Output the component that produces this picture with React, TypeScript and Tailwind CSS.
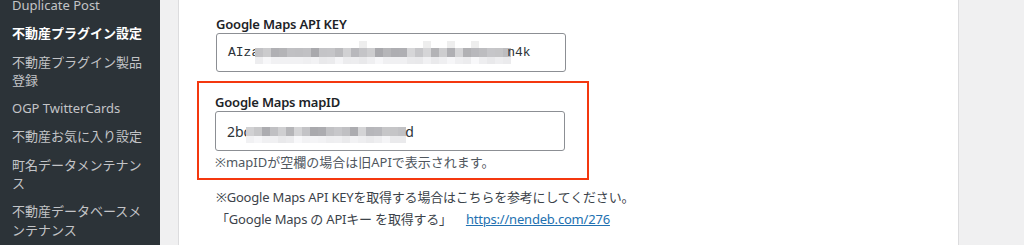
import React from 'react';

const menuItems = [
  { label: 'Duplicate Post' },
  { label: '不動産プラグイン設定', current: true },
  { label: '不動産プラグイン製品登録' },
  { label: 'OGP TwitterCards' },
  { label: '不動産お気に入り設定' },
  { label: '町名データメンテナンス' },
  { label: '不動産データベースメンテナンス' },
];

// pixelated blur over the secret values
const mosaicColor = (seed: number, row: number) => {
  const n = Math.abs(Math.sin(seed * 12.9898 + row * 78.233) * 43758.5453) % 1;
  if (row === 0) return n > 0.85 ? '#eeeeee' : '#ffffff';
  if (row === 1) return `rgb(${Math.round(168 + n * 48)},${Math.round(168 + n * 48)},${Math.round(172 + n * 46)})`;
  return `rgb(${Math.round(232 + n * 16)},${Math.round(232 + n * 16)},${Math.round(234 + n * 16)})`;
};

const Mosaic = ({ cells, seed }: { cells: number; seed: number }) => (
  <span className="inline-flex flex-col align-middle">
    {[0, 1, 2].map((row) => (
      <span key={row} className={`flex ${row === 1 ? 'h-[9px]' : 'h-[7px]'}`}>
        {Array.from({ length: cells }).map((_, i) => (
          <span key={i} className="w-[8px] h-full" style={{ background: mosaicColor(seed + i, row) }} />
        ))}
      </span>
    ))}
  </span>
);

const App: React.FC = () => {
  return (
    <div className="flex w-[1024px] h-[245px] overflow-hidden bg-[#f0f0f1] font-['Noto_Sans','Noto_Sans_CJK_JP',sans-serif]">
      {/* Sidebar */}
      <div className="w-[160px] shrink-0 bg-[#2c3338]">
        <ul className="-mt-[9px]">
          {menuItems.map((item) => (
            <li
              key={item.label}
              className={`px-[12px] py-[5px] text-[13px] leading-[18.3px] ${
                item.current ? 'text-white font-semibold' : 'text-[#c3c4c7]'
              }`}
            >
              {item.label}
            </li>
          ))}
        </ul>
      </div>

      {/* Content */}
      <div className="flex-1 pl-[18px]">
        <div className="w-[781px] h-full bg-white border-x border-[#dcdcde] pl-[18px] pt-[15px]">
          <div className="pl-[19px]">
            <div className="text-[13px] leading-[18px] font-semibold tracking-[-0.2px] text-[#1d2327]">Google Maps API KEY</div>
            <div className="w-[350px] h-[39px] border border-[#8c8f94] rounded-[3px] flex items-center pl-[11px] text-[13px] text-[#2c3338] font-['Liberation_Mono',monospace]">
              <span>AIza</span>
              <span className="-ml-[4px]"><Mosaic cells={32} seed={3} /></span>
              <span className="-ml-[4px]">n4k</span>
            </div>
          </div>

          {/* highlighted mapID block */}
          <div className="mt-[9px] w-[392px] border-2 border-[#f4380f] pl-[16px] pt-[10px] pb-[7px]">
            <div className="text-[13px] leading-[18px] font-semibold tracking-[-0.2px] text-[#1d2327]">Google Maps mapID</div>
            <div className="w-[350px] h-[40px] border border-[#8c8f94] rounded-[3px] flex items-center pl-[11px] text-[14px] text-[#2c3338]">
              <span>2bc</span>
              <span className="-ml-[4px]"><Mosaic cells={20} seed={41} /></span>
              <span className="-ml-[1px]">d</span>
            </div>
            <p className="mt-[2px] text-[13px] leading-[18px] text-[#50575e]">※mapIDが空欄の場合は旧APIで表示されます。</p>
          </div>

          <div className="pl-[19px] mt-[6px] text-[13px] leading-[22px] tracking-[-0.2px] text-[#3c434a]">
            <p>※Google Maps API KEYを取得する場合はこちらを参考にしてください。</p>
            <p>
              「Google Maps の APIキー を取得する」
              <a className="ml-[14px] text-[#2271b1] underline">https://nendeb.com/276</a>
            </p>
          </div>
        </div>
      </div>
    </div>
  );
};

export default App;
